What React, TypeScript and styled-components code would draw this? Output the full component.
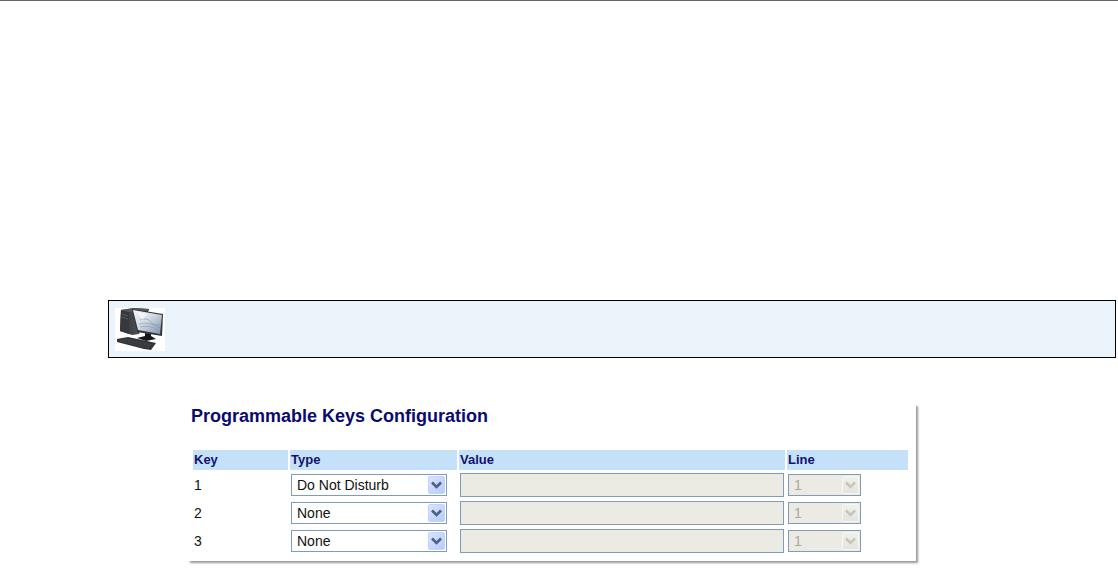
import React from "react";
import styled, { createGlobalStyle } from "styled-components";

const GlobalStyle = createGlobalStyle`
  *, *::before, *::after { box-sizing: border-box; }
  body {
    margin: 0;
    background: #fff;
    font-family: "Liberation Sans", Arial, sans-serif;
    font-size: 14px;
    line-height: 16px;
    color: #111;
  }
`;

const Page = styled.main`
  border-top: 1px solid #666;
  padding: 299px 2px 4px 108px;
`;

const Banner = styled.section`
  display: flex;
  align-items: center;
  height: 58px;
  padding: 0 6px;
  border: 1px solid #000;
  background: #ebf3fb;
`;

const Panel = styled.section`
  max-width: 730px;
  margin: 44px 0 0 78px;
  padding: 4px 6px 5px 5px;
  background: #fff;
  box-shadow: 3px 3px 2px -1px #999;
`;

const Title = styled.h1`
  margin: 0;
  padding-bottom: 22px;
  font-size: 18px;
  line-height: 20px;
  font-weight: bold;
  color: #0a0a72;
`;

const KeyTable = styled.table`
  width: 100%;
  table-layout: fixed;
  border-spacing: 2px;
`;

const HeadCell = styled.th<{ $width?: string }>`
  width: ${({ $width }) => $width ?? "auto"};
  height: 20px;
  padding: 0 1px;
  background: #c5e1fa;
  color: #12126e;
  font-size: 13px;
  line-height: 20px;
  text-align: left;
`;

const Cell = styled.td`
  height: 26px;
  padding: 1px;
  vertical-align: middle;
`;

const ValueInput = styled.input`
  display: block;
  width: 100%;
  height: 24px;
  padding: 0 4px;
  border: 1px solid #7f9db9;
  border-radius: 0;
  background: #ebebe4;
  font: inherit;
`;

const SelectBox = styled.div<{ $width: number }>`
  position: relative;
  width: ${({ $width }) => $width}px;
  max-width: 100%;
`;

const Select = styled.select`
  appearance: none;
  display: block;
  width: 100%;
  height: 22px;
  padding: 0 20px 0 5px;
  border: 1px solid #7f9db9;
  border-radius: 0;
  background: #fff;
  color: #111;
  font: inherit;

  &:disabled {
    background: #ebebe4;
    color: #aca899;
    opacity: 1;
  }
`;

const Arrow = styled.span<{ $disabled: boolean }>`
  position: absolute;
  top: 2px;
  right: 2px;
  width: 17px;
  height: 18px;
  border: 1px solid ${({ $disabled }) => ($disabled ? "#f6f6f2" : "#c4d4f8")};
  border-radius: 2px;
  background: ${({ $disabled }) =>
    $disabled ? "linear-gradient(#f1f1ec, #e4e4dc)" : "linear-gradient(135deg, #d8e4ff, #b6cbf9)"};
  color: ${({ $disabled }) => ($disabled ? "#c6c6bc" : "#4a6184")};
  pointer-events: none;

  svg { display: block; }
`;

type DropdownProps = { label: string; value: string; options: string[]; width: number; disabled?: boolean };

function Dropdown({ label, value, options, width, disabled = false }: DropdownProps) {
  return (
    <SelectBox $width={width}>
      <Select aria-label={label} defaultValue={value} disabled={disabled}>
        {options.map((option) => (
          <option key={option}>{option}</option>
        ))}
      </Select>
      <Arrow $disabled={disabled} aria-hidden="true">
        <svg width="15" height="16" viewBox="0 0 15 16">
          <path d="M3 5.5 L7.5 10 L12 5.5" fill="none" stroke="currentColor" strokeWidth="2.6" />
        </svg>
      </Arrow>
    </SelectBox>
  );
}

function ComputerIcon() {
  return (
    <svg width="50" height="43" viewBox="0 0 50 43" role="img" aria-label="Computer">
      <defs>
        <linearGradient id="screen" x1="0" y1="0" x2="1" y2="1">
          <stop offset="0" stopColor="#f4f5f8" />
          <stop offset="0.45" stopColor="#d3dce6" />
          <stop offset="0.75" stopColor="#a3b3c6" />
          <stop offset="1" stopColor="#8093aa" />
        </linearGradient>
        <linearGradient id="tower" x1="0" y1="0" x2="1" y2="0">
          <stop offset="0" stopColor="#303236" />
          <stop offset="0.6" stopColor="#4b4e52" />
          <stop offset="1" stopColor="#202226" />
        </linearGradient>
      </defs>
      <rect width="50" height="43" fill="#fff" />
      <path d="M6 2 L19 0 L34 1 L33 4 L24 26 L17 27 L5 23 Z" fill="url(#tower)" />
      <path d="M6 2 L14 4 L14 26 L5 23 Z" fill="#36383c" />
      <path d="M7 6 L13 8 M7 9 L13 11" stroke="#65686c" strokeWidth="0.7" />
      <path d="M6 2 L19 0 L34 1 L31 4 L14 4 Z" fill="#55585c" />
      <path d="M17 1 L48 6 L47 28 L22 24 Z" fill="#33373d" />
      <path d="M18 2 L47 7 L45 26 L23 22 Z" fill="url(#screen)" />
      <path d="M25 12 Q32 9 36 14 T45 16 M24 16 Q34 13 45 20 M25 19 Q35 16 44 23" stroke="#7d8fa6" strokeWidth="0.9" fill="none" opacity="0.6" />
      <path d="M22 4 L33 6 L27 12 Z" fill="#fff" opacity="0.6" />
      <path d="M30 25 L36 26 L36 28 L41 31 L31 33 L22 30 L30 28 Z" fill="#15171a" />
      <path d="M2 31 L13 29 L41 35 L36 42 L29 41 L2 34 Z" fill="#303236" />
      <path d="M7 32 L36 38 M10 31 L38 37 M5 33 L35 40" stroke="#53565c" strokeWidth="0.7" strokeDasharray="2 0.8" />
    </svg>
  );
}

const TYPES = ["None", "Do Not Disturb"];
const KEYS = [
  { id: 1, type: "Do Not Disturb" },
  { id: 2, type: "None" },
  { id: 3, type: "None" },
];

export default function App() {
  return (
    <>
      <GlobalStyle />
      <Page>
        <Banner>
          <ComputerIcon />
        </Banner>
        <Panel>
          <Title>Programmable Keys Configuration</Title>
          <KeyTable>
            <thead>
              <tr>
                <HeadCell scope="col" $width="95px">Key</HeadCell>
                <HeadCell scope="col" $width="167px">Type</HeadCell>
                <HeadCell scope="col">Value</HeadCell>
                <HeadCell scope="col" $width="121px">Line</HeadCell>
              </tr>
            </thead>
            <tbody>
              {KEYS.map(({ id, type }) => (
                <tr key={id}>
                  <Cell>{id}</Cell>
                  <Cell>
                    <Dropdown label={`Key ${id} type`} value={type} options={TYPES} width={156} />
                  </Cell>
                  <Cell>
                    <ValueInput type="text" aria-label={`Key ${id} value`} disabled />
                  </Cell>
                  <Cell>
                    <Dropdown label={`Key ${id} line`} value="1" options={["1"]} width={73} disabled />
                  </Cell>
                </tr>
              ))}
            </tbody>
          </KeyTable>
        </Panel>
      </Page>
    </>
  );
}
